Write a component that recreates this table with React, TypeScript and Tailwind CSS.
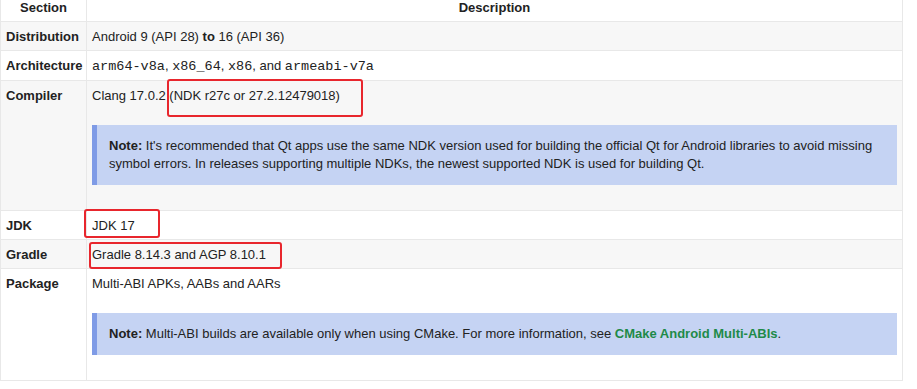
import type { ReactNode } from 'react';

const sans = 'font-["Liberation_Sans",Arial,sans-serif]';
const mono = 'font-["Liberation_Mono","Courier_New",monospace] text-[13.5px]';

function Note({ children }: { children: ReactNode }) {
  return (
    <div className="mt-[20px] mb-[21px] border-l-[5px] border-[#7f9be6] bg-[#c5d3f3] px-[12px] pt-[12px] pb-[12px]">
      <span className="font-bold">Note:</span> {children}
    </div>
  );
}

function Row({ label, shaded, children }: { label: string; shaded?: boolean; children: ReactNode }) {
  return (
    <tr className={`border-b border-[#e8e8e8] ${shaded ? 'bg-[#f7f7f7]' : 'bg-white'}`}>
      <td className="overflow-visible whitespace-nowrap border-r border-[#e8e8e8] pl-[5px] pr-0 pt-[6px] pb-[4px] align-top font-bold">
        {label}
      </td>
      <td className="px-[5px] pt-[6px] pb-[4px] align-top">{children}</td>
    </tr>
  );
}

export default function App() {
  return (
    <div className={`relative h-[389px] w-[917px] overflow-hidden bg-white text-[13px] leading-[18px] text-[#222] ${sans}`}>
      <table className="w-[903px] table-fixed border-collapse border-x border-b border-[#e8e8e8] text-left">
        <colgroup>
          <col className="w-[86px]" />
          <col />
        </colgroup>
        <thead>
          <tr className="border-b border-[#e8e8e8] bg-white">
            <th className="border-r border-[#e8e8e8] px-[5px] pt-[1px] pb-[6px] text-center font-bold leading-[14px]">Section</th>
            <th className="px-[5px] pt-[1px] pb-[6px] text-center font-bold leading-[14px]">Description</th>
          </tr>
        </thead>
        <tbody>
          <Row label="Distribution" shaded>
            Android 9 (API 28) <span className="font-bold">to</span> 16 (API 36)
          </Row>
          <Row label="Architecture">
            <span className={mono}>arm64-v8a</span>, <span className={mono}>x86_64</span>, <span className={mono}>x86</span>, and{' '}
            <span className={mono}>armeabi-v7a</span>
          </Row>
          <Row label="Compiler" shaded>
            Clang 17.0.2 (NDK r27c or 27.2.12479018)
            <Note>
              It's recommended that Qt apps use the same NDK version used for building the official Qt for Android libraries to avoid missing
              symbol errors. In releases supporting multiple NDKs, the newest supported NDK is used for building Qt.
            </Note>
          </Row>
          <Row label="JDK">JDK 17</Row>
          <Row label="Gradle" shaded>
            Gradle 8.14.3 and AGP 8.10.1
          </Row>
          <Row label="Package">
            Multi-ABI APKs, AABs and AARs
            <Note>
              Multi-ABI builds are available only when using CMake. For more information, see{' '}
              <span className="font-bold text-[#1e8a48]">CMake Android Multi-ABIs</span>.
            </Note>
          </Row>
        </tbody>
      </table>

      {/* red annotation boxes drawn over the table */}
      <div className="absolute left-[167px] top-[79px] h-[38px] w-[196px] rounded-[3px] border-2 border-[#e8262d]" />
      <div className="absolute left-[84px] top-[209px] h-[29px] w-[76px] rounded-[3px] border-2 border-[#e8262d]" />
      <div className="absolute left-[89px] top-[242px] h-[27px] w-[193px] rounded-[3px] border-2 border-[#e8262d]" />
    </div>
  );
}
